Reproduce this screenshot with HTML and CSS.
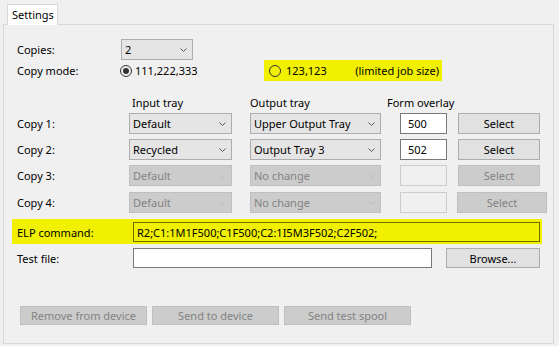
FILE: index.html
```html
<!DOCTYPE html>
<html lang="en">
  <head>
    <meta charset="utf-8">
    <title>Settings</title>
    <link rel="stylesheet" href="styles.css">
  </head>
  <body>
  <div class="window">
    <div class="tabs">
      <div class="tab">Settings</div>
    </div>
    <div class="panel">
      <div class="row">
        <span class="label">Copies:</span>
        <div class="combo combo-copies">2<svg class="chev" width="7" height="4" viewBox="0 0 7 4"><polyline points="0.5,0.5 3.5,3.5 6.5,0.5"/></svg></div>
      </div>
      <div class="row">
        <span class="label">Copy mode:</span>
        <div class="option"><span class="radio checked"></span>111,222,333</div>
        <div class="option option-limited"><span class="radio"></span><span class="value">123,123</span><span class="note">(limited job size)</span></div>
      </div>

      <div class="row heads">
        <span class="label label-copy"></span>
        <span class="head head-in">Input tray</span>
        <span class="head head-out">Output tray</span>
        <span class="head head-form">Form overlay</span>
      </div>

      <div class="row copy">
        <span class="label label-copy">Copy 1:</span>
        <div class="combo combo-in">Default<svg class="chev" width="7" height="4" viewBox="0 0 7 4"><polyline points="0.5,0.5 3.5,3.5 6.5,0.5"/></svg></div>
        <div class="combo combo-out">Upper Output Tray<svg class="chev" width="7" height="4" viewBox="0 0 7 4"><polyline points="0.5,0.5 3.5,3.5 6.5,0.5"/></svg></div>
        <div class="field field-form">500</div>
        <div class="btn btn-select">Select</div>
      </div>
      <div class="row copy">
        <span class="label label-copy">Copy 2:</span>
        <div class="combo combo-in">Recycled<svg class="chev" width="7" height="4" viewBox="0 0 7 4"><polyline points="0.5,0.5 3.5,3.5 6.5,0.5"/></svg></div>
        <div class="combo combo-out">Output Tray 3<svg class="chev" width="7" height="4" viewBox="0 0 7 4"><polyline points="0.5,0.5 3.5,3.5 6.5,0.5"/></svg></div>
        <div class="field field-form">502</div>
        <div class="btn btn-select">Select</div>
      </div>
      <div class="row copy off">
        <span class="label label-copy">Copy 3:</span>
        <div class="combo combo-in">Default<svg class="chev" width="7" height="4" viewBox="0 0 7 4"><polyline points="0.5,0.5 3.5,3.5 6.5,0.5"/></svg></div>
        <div class="combo combo-out">No change<svg class="chev" width="7" height="4" viewBox="0 0 7 4"><polyline points="0.5,0.5 3.5,3.5 6.5,0.5"/></svg></div>
        <div class="field field-form"></div>
        <div class="btn btn-select">Select</div>
      </div>
      <div class="row copy copy-last off">
        <span class="label label-copy">Copy 4:</span>
        <div class="combo combo-in">Default<svg class="chev" width="7" height="4" viewBox="0 0 7 4"><polyline points="0.5,0.5 3.5,3.5 6.5,0.5"/></svg></div>
        <div class="combo combo-out">No change<svg class="chev" width="7" height="4" viewBox="0 0 7 4"><polyline points="0.5,0.5 3.5,3.5 6.5,0.5"/></svg></div>
        <div class="field field-form"></div>
        <div class="btn btn-select btn-wide">Select</div>
      </div>

      <div class="elp">
        <span class="label label-wide">ELP command:</span>
        <div class="field field-elp">R2;C1:1M1F500;C1F500;C2:1I5M3F502;C2F502;</div>
      </div>

      <div class="row test">
        <span class="label label-wide">Test file:</span>
        <div class="field field-file"></div>
        <div class="btn btn-browse">Browse...</div>
      </div>

      <div class="actions">
        <div class="btn btn-action">Remove from device</div>
        <div class="btn btn-action">Send to device</div>
        <div class="btn btn-action">Send test spool</div>
      </div>
    </div>
  </div>
  </body>
</html>
```

FILE: styles.css
```css
body {
  margin: 0;
  background-color: #F0F0F0;
  font-family: "Noto Sans", "Open Sans", sans-serif;
  font-size: 11px;
  color: #000000;
}
.window {
  padding: 4px 0 0 3px;
}

/* Tab strip */
.tabs {
  display: flex;
  padding-left: 4px;
}
.tab {
  position: relative;
  z-index: 1;
  width: 51px;
  height: 21px;
  margin-bottom: -1px;
  box-sizing: border-box;
  border: 1px solid #D9D9D9;
  border-bottom: none;
  background-color: #FFFFFF;
  padding: 2px 0 0 4px;
}
.panel {
  width: 551px;
  height: 320px;
  box-sizing: border-box;
  border: 1px solid #D9D9D9;
  padding: 14px 0 0 13px;
}

/* Rows */
.row {
  display: flex;
  align-items: center;
  height: 21px;
}
.label {
  flex: none;
  width: 104px;
}
.label-copy {
  width: 112px;
}
.label-wide {
  width: 116px;
}

/* Combo boxes */
.combo {
  flex: none;
  display: flex;
  align-items: center;
  justify-content: space-between;
  height: 21px;
  box-sizing: border-box;
  border: 1px solid #ADADAD;
  background-color: #E5E5E5;
  padding: 0 5px 0 3px;
}
.chev {
  fill: none;
  stroke: #555555;
  stroke-width: 1;
}
.combo-copies {
  width: 72px;
}
.combo-in {
  width: 103px;
}
.combo-out {
  width: 131px;
  margin-left: 18px;
}

/* Radio options */
.option {
  flex: none;
  display: flex;
  align-items: center;
  width: 145px;
  margin-left: -1px;
}
.radio {
  width: 12px;
  height: 12px;
  box-sizing: border-box;
  border: 1px solid #333333;
  border-radius: 50%;
  margin-right: 3px;
  display: flex;
  align-items: center;
  justify-content: center;
}
.radio.checked::after {
  content: "";
  width: 6px;
  height: 6px;
  border-radius: 50%;
  background-color: #333333;
}
.option-limited {
  width: 178px;
  height: 21px;
  box-sizing: border-box;
  background-color: #F0F000;
  padding: 0 3px 0 5px;
}
.option-limited .radio {
  margin-right: 5px;
}
.option-limited .note {
  margin-left: auto;
}

/* Column headers */
.heads {
  margin-top: 11px;
  height: 20px;
}
.head {
  flex: none;
}
.head-in {
  width: 118px;
  padding-left: 3px;
}
.head-out {
  width: 137px;
}

/* Copy rows */
.copy {
  margin-top: 5px;
}
.heads + .copy {
  margin-top: 1px;
}
.copy-last {
  margin-top: 6px;
}

/* Text fields */
.field {
  flex: none;
  height: 21px;
  box-sizing: border-box;
  border: 1px solid #7A7A7A;
  background-color: #FFFFFF;
  display: flex;
  align-items: center;
}
.field-form {
  width: 47px;
  margin-left: 19px;
  padding-left: 7px;
}

/* Buttons */
.btn {
  flex: none;
  display: flex;
  align-items: center;
  justify-content: center;
  height: 21px;
  box-sizing: border-box;
  border: 1px solid #ADADAD;
  background-color: #E1E1E1;
}
.btn-select {
  width: 82px;
  margin-left: 11px;
}
.btn-wide {
  width: 90px;
  margin-left: 10px;
}

/* Disabled rows */
.off .combo,
.off .btn {
  border-color: #BFBFBF;
  background-color: #CCCCCC;
  color: #838383;
}
.off .chev {
  stroke: #BFBFBF;
}
.off .field {
  border-color: #CCCCCC;
  background-color: #F0F0F0;
}

/* ELP command */
.elp {
  display: flex;
  align-items: center;
  width: 530px;
  height: 25px;
  box-sizing: border-box;
  margin: 6px 0 0 -5px;
  padding: 1px 2px 0 5px;
  background-color: #F0F000;
}
.field-elp {
  width: 407px;
  height: 20px;
  border-color: #6E6E00;
  background-color: #F0F000;
  padding-left: 3px;
}

/* Test file */
.test {
  margin-top: 4px;
  height: 20px;
}
.field-file {
  width: 299px;
  height: 20px;
}
.btn-browse {
  width: 94px;
  height: 20px;
  margin-left: 14px;
}

/* Bottom actions */
.actions {
  display: flex;
  gap: 5px;
  margin: 38px 0 0 3px;
}
.btn-action {
  width: 127px;
  height: 19px;
  border-color: #BFBFBF;
  background-color: #CCCCCC;
  color: #838383;
}
```
